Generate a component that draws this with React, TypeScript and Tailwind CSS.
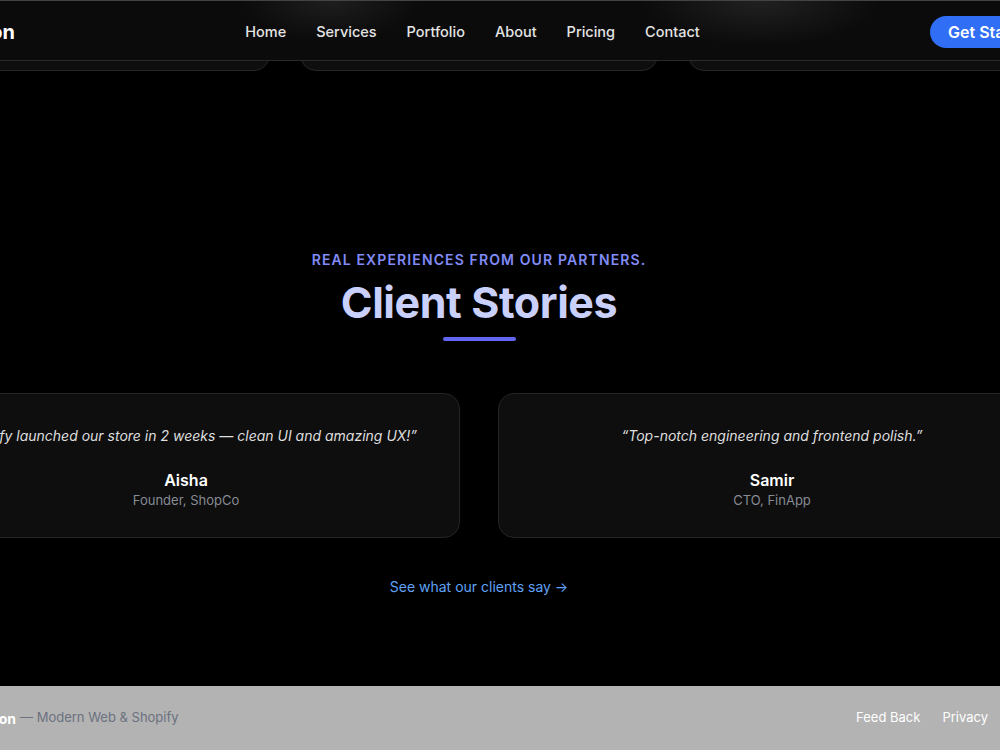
import React from 'react';

const navLinks = ['Home', 'Services', 'Portfolio', 'About', 'Pricing', 'Contact'];

const testimonials = [
  {
    quote: '“Shopify launched our store in 2 weeks — clean UI and amazing UX!”',
    name: 'Aisha',
    role: 'Founder, ShopCo',
  },
  {
    quote: '“Top-notch engineering and frontend polish.”',
    name: 'Samir',
    role: 'CTO, FinApp',
  },
];

const Header = () => {
  return (
    <header className="absolute inset-x-0 top-0 z-10 h-[61px] border-t border-b border-t-[#444] border-b-[#2a2a2a] bg-[#0b0b0b]">
      <div className="pointer-events-none absolute inset-0 bg-[radial-gradient(ellipse_90px_40px_at_330px_0px,rgba(255,255,255,0.08),transparent)]" />
      <div className="pointer-events-none absolute inset-0 bg-[radial-gradient(ellipse_120px_45px_at_760px_0px,rgba(255,255,255,0.09),transparent)]" />
      <div className="relative flex h-full w-[958px] flex-col items-center justify-center pt-[2px]">
        <div className="flex w-[1134px] shrink-0 items-center justify-between">
          <div className="w-[103px] text-right text-[20px] font-bold text-white">
            Pixelion
          </div>
          <nav className="flex items-center gap-[30px] text-[14.5px] font-medium text-[#e4e4e4]">
            {navLinks.map((link) => (
              <span key={link}>{link}</span>
            ))}
          </nav>
          <button className="h-8 w-[116px] whitespace-nowrap rounded-full bg-[#2f6ef5] pl-[18px] text-left text-[16px] font-semibold text-white">
            Get Started
          </button>
        </div>
      </div>
    </header>
  );
};

const App = () => {
  return (
    <div
      className="relative flex h-[750px] w-[1000px] flex-col overflow-hidden bg-black"
      style={{ fontFamily: 'Inter, "Liberation Sans", sans-serif' }}
    >
      <Header />

      <main className="flex w-[958px] flex-col items-center">
        {/* previous section cards, mostly hidden under header */}
        <div className="-mt-[129px] flex w-[1134px] shrink-0 gap-[30px]">
          {[0, 1, 2].map((i) => (
            <div
              key={i}
              className="h-[200px] w-[358px] rounded-2xl border border-[#262626] bg-[#0e0e0e]"
            />
          ))}
        </div>

        <p className="mt-[179px] text-[14px] font-semibold uppercase leading-5 tracking-[0.08em] text-[#818cf8]">
          Real experiences from our partners.
        </p>
        <h2 className="mt-[6px] text-[43px] font-bold leading-[52px] tracking-[-0.01em] text-[#c9d0fc]">
          Client Stories
        </h2>
        <div className="mt-[9px] h-1 w-[73px] rounded-full bg-[#6366f1]" />

        <div className="mt-[52px] flex w-[1134px] shrink-0 gap-[38px]">
          {testimonials.map((t) => (
            <div
              key={t.name}
              className="flex h-[145px] w-[548px] flex-col items-center rounded-2xl border border-[#242424] bg-[#0e0e0e] pt-[30px]"
            >
              <p className="whitespace-nowrap text-[14px] italic leading-6 text-[#dedede]">
                {t.quote}
              </p>
              <p className="mt-[21px] text-[16px] font-semibold leading-[22px] text-white">
                {t.name}
              </p>
              <p className="text-[13px] leading-[18px] text-[#868b94]">{t.role}</p>
            </div>
          ))}
        </div>

        <a className="mt-[37px] text-[14px] leading-6 text-[#5fa2f5]">
          See what our clients say →
        </a>
      </main>

      <footer className="mt-auto flex h-[64px] items-center justify-between bg-[#b3b3b3] pr-[12px] text-[13px]">
        <div className="flex items-center whitespace-nowrap">
          <span className="-ml-[55px] inline-block w-[71px] text-right text-[14px] font-bold text-white">
            Pixelion
          </span>
          <span className="ml-[4px] text-[#6b7180]">— Modern Web &amp; Shopify</span>
        </div>
        <div className="flex items-center gap-[22px] text-white">
          <span>Feed Back</span>
          <span>Privacy</span>
        </div>
      </footer>
    </div>
  );
};

export default App;
